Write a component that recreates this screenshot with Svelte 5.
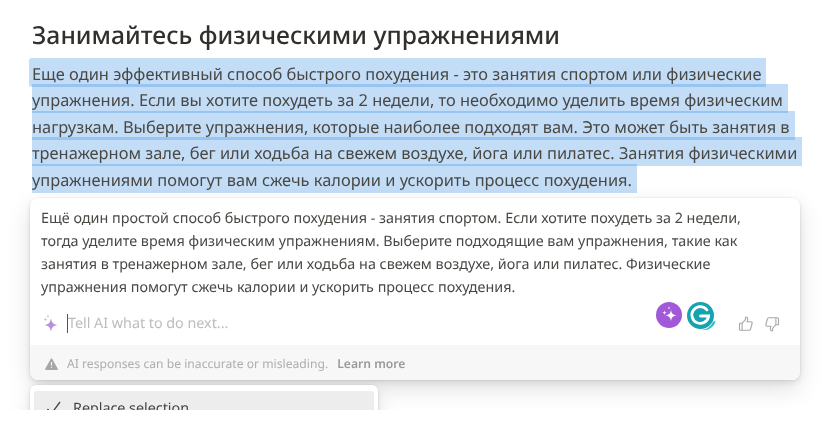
<script>
  const selected = [
    'Еще один эффективный способ быстрого похудения - это занятия спортом или физические',
    'упражнения. Если вы хотите похудеть за 2 недели, то необходимо уделить время физическим',
    'нагрузкам. Выберите упражнения, которые наиболее подходят вам. Это может быть занятия в',
    'тренажерном зале, бег или ходьба на свежем воздухе, йога или пилатес. Занятия физическими',
    'упражнениями помогут вам сжечь калории и ускорить процесс похудения.'
  ];
  const answer = [
    'Ещё один простой способ быстрого похудения - занятия спортом. Если хотите похудеть за 2 недели,',
    'тогда уделите время физическим упражнениям. Выберите подходящие вам упражнения, такие как',
    'занятия в тренажерном зале, бег или ходьба на свежем воздухе, йога или пилатес. Физические',
    'упражнения помогут сжечь калории и ускорить процесс похудения.'
  ];
</script>

<div class="page">
  <h1>Занимайтесь физическими упражнениями</h1>
  <p class="para">
    {#each selected as line, i}
      <span class="sel" class:first={i === 0}>{line}</span>
    {/each}
  </p>

  <section class="card">
    <div class="answer">
      {#each answer as line}
        <div>{line}</div>
      {/each}
    </div>
    <div class="prompt">
      <svg class="spark" width="18" height="20" viewBox="0 0 18 20">
        <path d="M9 4 C9.7 8.6 11 10.3 16 11 C11 11.7 9.7 13.4 9 18 C8.3 13.4 7 11.7 2 11 C7 10.3 8.3 8.6 9 4Z" fill="#b693d8"/>
        <path d="M6 .5 C6.2 1.6 6.5 2 7.6 2.2 C6.5 2.4 6.2 2.8 6 3.9 C5.8 2.8 5.5 2.4 4.4 2.2 C5.5 2 5.8 1.6 6 .5Z" fill="#cbb5e3"/>
        <path d="M3.5 3.5 C3.7 4.8 4.1 5.2 5.3 5.4 C4.1 5.6 3.7 6 3.5 7.3 C3.3 6 2.9 5.6 1.7 5.4 C2.9 5.2 3.3 4.8 3.5 3.5Z" fill="#cbb5e3"/>
      </svg>
      <span class="placeholder">Tell AI what to do next...</span>
      <div class="badges">
        <svg width="26" height="26" viewBox="0 0 26 26">
          <circle cx="13" cy="13" r="13" fill="#a259d9"/>
          <path d="M15 7.5 C15.5 11.6 16.6 12.8 20.8 13.4 C16.6 14 15.5 15.2 15 19.4 C14.5 15.2 13.4 14 9.2 13.4 C13.4 12.8 14.5 11.6 15 7.5Z" fill="#fff"/>
          <path d="M8.5 8.5 C8.7 10 9.2 10.5 10.8 10.8 C9.2 11 8.7 11.5 8.5 13 C8.3 11.5 7.8 11 6.2 10.8 C7.8 10.5 8.3 10 8.5 8.5Z" fill="#fff"/>
          <path d="M13 4.5 C13.1 5.4 13.5 5.7 14.3 5.9 C13.5 6 13.1 6.4 13 7.3 C12.9 6.4 12.5 6 11.7 5.9 C12.5 5.7 12.9 5.4 13 4.5Z" fill="#fff"/>
        </svg>
        <svg width="31" height="28" viewBox="0 0 31 28">
          <circle cx="14.5" cy="13.5" r="13.5" fill="#15a3af"/>
          <path d="M27 20 A13.5 13.5 0 0 1 14 27.6 L19 28 C24 27.5 28.5 24.5 29.6 18.5Z" fill="#2cbcc8"/>
          <path d="M21 8 A8.4 8.4 0 1 0 22.6 14 H14.5" fill="none" stroke="#fff" stroke-width="2.8" stroke-linecap="round"/>
        </svg>
      </div>
      <div class="thumbs">
        <svg width="16" height="16" viewBox="0 0 16 16" fill="none" stroke="#a8a8a8" stroke-width="1.1" stroke-linejoin="round">
          <path d="M1.5 7.2h2.6v7H2.5a1 1 0 0 1-1-1z"/>
          <path d="M4.1 7.4 7.4 3.6V1.8c0-.9 1.8-1 2.2.5.3 1.1-.1 2.6-.6 3.5h3.9c1 0 1.5.9 1.2 1.7l-1.5 5.6c-.2.7-.8 1.1-1.5 1.1H4.1"/>
        </svg>
        <svg width="16" height="16" viewBox="0 0 16 16" fill="none" stroke="#a8a8a8" stroke-width="1.1" stroke-linejoin="round">
          <path d="M14.5 8.8h-2.6v-7h1.6a1 1 0 0 1 1 1z"/>
          <path d="M11.9 8.6 8.6 12.4v1.8c0 .9-1.8 1-2.2-.5-.3-1.1.1-2.6.6-3.5H3.1c-1 0-1.5-.9-1.2-1.7l1.5-5.6c.2-.7.8-1.1 1.5-1.1h6.9"/>
        </svg>
      </div>
    </div>
    <footer class="note">
      <svg width="13" height="12" viewBox="0 0 13 12">
        <path d="M6.5.6 12.6 11.4H.4Z" fill="#a6a6a6" stroke="#a6a6a6" stroke-width="1" stroke-linejoin="round"/>
        <path d="M6.5 4v3.6M6.5 8.8v1" stroke="#f7f7f7" stroke-width="1.2"/>
      </svg>
      <span>AI responses can be inaccurate or misleading.</span>
      <strong>Learn more</strong>
    </footer>
  </section>

  <section class="menu">
    <div class="item">
      <svg width="16" height="14" viewBox="0 0 16 14" fill="none" stroke="#444" stroke-width="1.3"><path d="M1.5 8 5.5 12.5 14 1"/></svg>
      <span>Replace selection</span>
    </div>
  </section>
</div>

<style>
  :global(body) {
    margin: 0;
    background: #fff;
  }
  .page {
    box-sizing: border-box;
    height: 410px;
    overflow: hidden;
    padding: 20px 28px 0 30px;
    font-family: "Noto Sans", "Open Sans", sans-serif;
    text-rendering: geometricPrecision;
    color: #37352f;
    filter: blur(0.3px);
  }
  h1 {
    margin: 0 0 0 2px;
    font-size: 24.7px;
    line-height: 32px;
    font-weight: 500;
    color: #32302c;
    white-space: nowrap;
  }
  .para {
    margin: 6px 0 0;
    height: 140px;
  }
  .sel {
    display: block;
    width: fit-content;
    box-sizing: border-box;
    height: 29px;
    margin: 0 0 -2.6px 2px;
    padding-right: 5px;
    font-size: 16.4px;
    line-height: 32px;
    white-space: nowrap;
    background: rgba(35, 131, 226, 0.27);
    color: #4a4844;
  }
  .sel.first {
    margin-left: -1px;
    padding-left: 3px;
    border-radius: 3px 0 0 3px;
  }
  .card {
    margin-top: 0;
    width: 770px;
    height: 182px;
    border-radius: 8px;
    background: #fff;
    box-shadow: 0 0 0 1px rgba(15, 15, 15, 0.04), 0 3px 6px rgba(15, 15, 15, 0.1), 0 9px 24px rgba(15, 15, 15, 0.12);
    display: flex;
    flex-direction: column;
    overflow: hidden;
  }
  .answer {
    padding: 9px 11px 0;
    font-size: 14.35px;
    line-height: 23px;
    color: #4a4844;
    white-space: nowrap;
  }
  .prompt {
    flex: 1;
    display: flex;
    align-items: center;
    padding: 0 20px 0 12px;
  }
  .spark {
    flex: none;
    margin: 4px 7px 0 0;
  }
  .placeholder {
    margin-top: 3px;
    border-left: 1px solid #55534e;
    font-size: 14.3px;
    line-height: 19px;
    color: #bdbcb9;
  }
  .badges {
    margin: -12px 0 0 auto;
    display: flex;
    gap: 4px;
  }
  .thumbs {
    margin: 3px 0 0 21px;
    display: flex;
    gap: 10px;
  }
  .note {
    height: 35px;
    flex: none;
    display: flex;
    align-items: center;
    gap: 9px;
    padding: 2px 15px 0;
    box-sizing: border-box;
    background: #f7f7f7;
    font-size: 12.15px;
    color: #aeadaa;
  }
  .note strong {
    font-weight: 600;
    color: #9b9a97;
  }
  .menu {
    margin-top: 5px;
    width: 348px;
    height: 60px;
    padding: 6px 4px;
    box-sizing: border-box;
    border-radius: 6px;
    background: #fff;
    box-shadow: 0 0 0 1px rgba(15, 15, 15, 0.04), 0 3px 6px rgba(15, 15, 15, 0.1), 0 9px 24px rgba(15, 15, 15, 0.12);
  }
  .item {
    height: 34px;
    border-radius: 3px;
    background: #ededed;
    display: flex;
    align-items: center;
    gap: 11px;
    padding: 0 10px 5px 12px;
    font-size: 14.3px;
    color: #44423d;
  }
</style>
